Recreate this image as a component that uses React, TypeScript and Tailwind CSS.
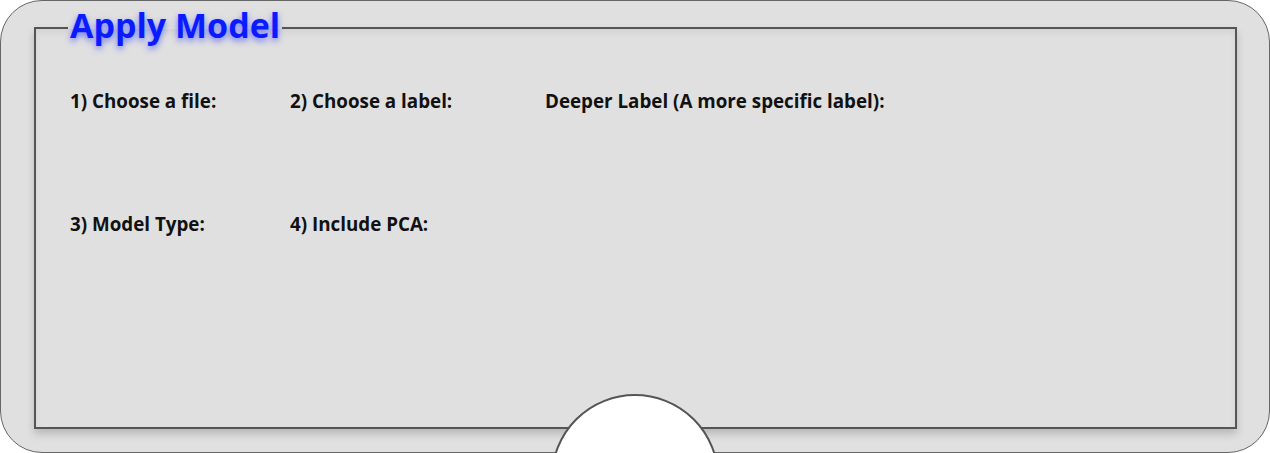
export default function App() {
  return (
    <div className="h-[453px] w-[1270px] overflow-hidden bg-white font-['Open_Sans',sans-serif]">
      <div className="relative h-[453px] w-[1270px] rounded-[42px] border border-[#666] bg-[#e0e0e0] pt-[7px]">
        <fieldset className="ml-[33px] mr-[32px] h-[421px] border-2 border-[#555] px-[34px] shadow-[0_5px_8px_rgba(0,0,0,0.18),inset_0_4px_6px_rgba(0,0,0,0.06)]">
          <legend className="-ml-[2px] px-[2px] pb-[6px] text-[34px] font-bold leading-[34px] text-[#0a1cff] [text-shadow:0_3px_6px_rgba(20,40,255,0.55)]">
            Apply Model
          </legend>
          <div className="mt-[40px] grid grid-cols-[220px_255px_1fr] gap-y-[97px] text-[18.8px] font-bold leading-[26px] text-[#111]">
            <div>1) Choose a file:</div>
            <div>2) Choose a label:</div>
            <div>Deeper Label (A more specific label):</div>
            <div>3) Model Type:</div>
            <div>4) Include PCA:</div>
            <div />
          </div>
        </fieldset>
        <div className="absolute left-[550px] top-[393px] h-[168px] w-[168px] rounded-full border-2 border-[#555] bg-white" />
      </div>
    </div>
  );
}
